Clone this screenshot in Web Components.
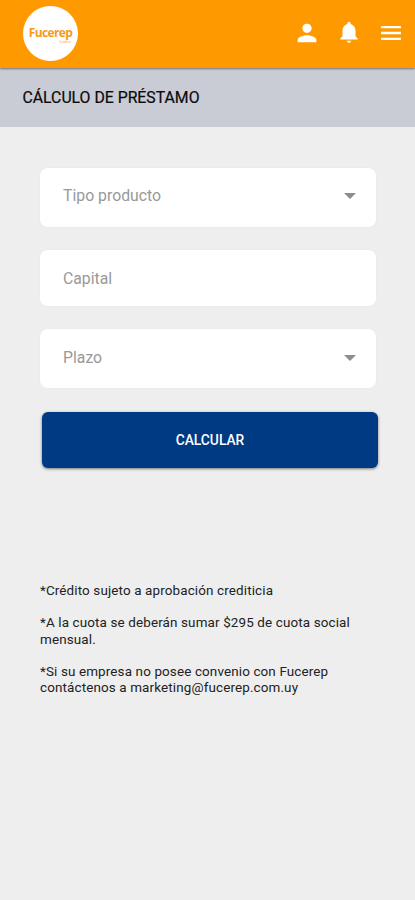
<!DOCTYPE html>
<html lang="es">
<head>
<meta charset="utf-8">
<title>Cálculo de préstamo</title>
<style>
    body {
        margin: 0;
        min-height: 100vh;
        background: #eeeeee;
        font-family: Roboto, "Liberation Sans", sans-serif;
    }
</style>
</head>
<body>
<loan-page>
    <app-header slot="header"></app-header>
    <page-title slot="header">CÁLCULO DE PRÉSTAMO</page-title>
    <form-field dropdown>Tipo producto</form-field>
    <form-field>Capital</form-field>
    <form-field dropdown>Plazo</form-field>
    <submit-button>CALCULAR</submit-button>
    <legal-note slot="notes">*Crédito sujeto a aprobación crediticia</legal-note>
    <legal-note slot="notes">*A la cuota se deberán sumar $295 de cuota social<br>mensual.</legal-note>
    <legal-note slot="notes">*Si su empresa no posee convenio con Fucerep<br>contáctenos a marketing@fucerep.com.uy</legal-note>
</loan-page>
<script>
class LoanPage extends HTMLElement {
    constructor() {
        super();
        this.attachShadow({mode: 'open'});
        this.shadowRoot.innerHTML = `
            <style>
                :host {
                    display: block;
                }
                main {
                    display: flex;
                    flex-direction: column;
                    gap: 23px;
                    padding: 41px 39px 0 40px;
                }
                ::slotted(form-field:first-of-type) {
                    padding-bottom: 4px;
                }
                section {
                    display: flex;
                    flex-direction: column;
                    gap: 16px;
                    padding: 115px 40px 0;
                }
            </style>
            <slot name="header"></slot>
            <main><slot></slot></main>
            <section><slot name="notes"></slot></section>
        `;
    }
}

class AppHeader extends HTMLElement {
    constructor() {
        super();
        this.attachShadow({mode: 'open'});
        this.shadowRoot.innerHTML = `
            <style>
                :host {
                    display: flex;
                    align-items: center;
                    justify-content: space-between;
                    position: relative;
                    box-sizing: border-box;
                    height: 68px;
                    padding: 0 10px 2px 23px;
                    background: #ff9900;
                    box-shadow: 0 1px 2px rgba(0,0,0,0.45);
                }
                nav {
                    display: flex;
                    align-items: center;
                    gap: 14px;
                }
                svg {
                    display: block;
                    width: 28px;
                    height: 28px;
                    fill: white;
                }
                .bell {
                    width: 26px;
                    height: 26px;
                    margin: 0 1px 2px;
                }
            </style>
            <brand-logo></brand-logo>
            <nav>
                <svg viewBox="0 0 24 24"><path d="M12 12c2.21 0 4-1.79 4-4s-1.79-4-4-4-4 1.79-4 4 1.79 4 4 4zm0 2c-2.67 0-8 1.34-8 4v2h16v-2c0-2.66-5.33-4-8-4z"/></svg>
                <svg class="bell" viewBox="0 0 24 24"><path d="M12 22c1.1 0 2-.9 2-2h-4c0 1.1.9 2 2 2zm6-6v-5c0-3.07-1.63-5.64-4.5-6.32V4c0-.83-.67-1.5-1.5-1.5s-1.5.67-1.5 1.5v.68C7.64 5.36 6 7.92 6 11v5l-2 2v1h16v-1l-2-2z"/></svg>
                <svg viewBox="0 0 24 24"><path d="M3.5 18h17v-2h-17v2zm0-5h17v-2h-17v2zm0-7v2h17V6h-17z"/></svg>
            </nav>
        `;
    }
}

class BrandLogo extends HTMLElement {
    constructor() {
        super();
        this.attachShadow({mode: 'open'});
        this.shadowRoot.innerHTML = `
            <style>
                :host {
                    display: flex;
                    flex-direction: column;
                    align-items: center;
                    box-sizing: border-box;
                    width: 55px;
                    height: 55px;
                    padding-top: 19px;
                    border-radius: 50%;
                    background: white;
                    color: #f59a23;
                }
                b {
                    font: 700 12px/15px "Open Sans", sans-serif;
                    letter-spacing: -0.6px;
                }
                small {
                    align-self: flex-end;
                    margin-right: 7px;
                    font: 3px/5px "Open Sans", sans-serif;
                }
            </style>
            <b>Fucerep</b>
            <small>Créditos</small>
        `;
    }
}

class PageTitle extends HTMLElement {
    constructor() {
        super();
        this.attachShadow({mode: 'open'});
        this.shadowRoot.innerHTML = `
            <style>
                :host {
                    display: flex;
                    align-items: center;
                    box-sizing: border-box;
                    height: 59px;
                    padding: 0 0 1px 22.5px;
                    background: #c9ccd4;
                    color: #0a0a0a;
                    font-size: 15.8px;
                    -webkit-text-stroke: 0.2px;
                }
            </style>
            <slot></slot>
        `;
    }
}

class FormField extends HTMLElement {
    constructor() {
        super();
        this.attachShadow({mode: 'open'});
        this.shadowRoot.innerHTML = `
            <style>
                :host {
                    display: flex;
                    align-items: center;
                    justify-content: space-between;
                    box-sizing: border-box;
                    width: 335.5px;
                    height: 56px;
                    padding: 0 20px 0 23px;
                    border-radius: 7px;
                    background: white;
                    box-shadow: 0 0 1px rgba(0,0,0,0.12);
                    color: #999;
                    font-size: 15.8px;
                }
                :host([dropdown]) {
                    height: 59px;
                    padding-bottom: 3px;
                }
                i {
                    display: none;
                    margin-top: 1px;
                    border: 6px solid transparent;
                    border-top-color: #8a8e90;
                    border-bottom: 0;
                }
                :host([dropdown]) i {
                    display: block;
                }
            </style>
            <slot></slot>
            <i></i>
        `;
    }
}

class SubmitButton extends HTMLElement {
    constructor() {
        super();
        this.attachShadow({mode: 'open'});
        this.shadowRoot.innerHTML = `
            <style>
                :host {
                    display: block;
                    margin: 1px 0 0 2px;
                }
                button {
                    display: block;
                    width: 336px;
                    height: 56px;
                    padding: 0;
                    border: 0;
                    border-radius: 6px;
                    background: #003a83;
                    box-shadow: 0 1px 3px rgba(0,0,0,0.5);
                    color: white;
                    font: 500 13.8px Roboto, sans-serif;
                }
            </style>
            <button><slot></slot></button>
        `;
    }
}

class LegalNote extends HTMLElement {
    constructor() {
        super();
        this.attachShadow({mode: 'open'});
        this.shadowRoot.innerHTML = `
            <style>
                :host {
                    display: block;
                    color: #222;
                    font-size: 13.45px;
                    letter-spacing: 0.13px;
                    line-height: 16.3px;
                    white-space: nowrap;
                }
            </style>
            <slot></slot>
        `;
    }
}

customElements.define('loan-page', LoanPage);
customElements.define('app-header', AppHeader);
customElements.define('brand-logo', BrandLogo);
customElements.define('page-title', PageTitle);
customElements.define('form-field', FormField);
customElements.define('submit-button', SubmitButton);
customElements.define('legal-note', LegalNote);
</script>
</body>
</html>
